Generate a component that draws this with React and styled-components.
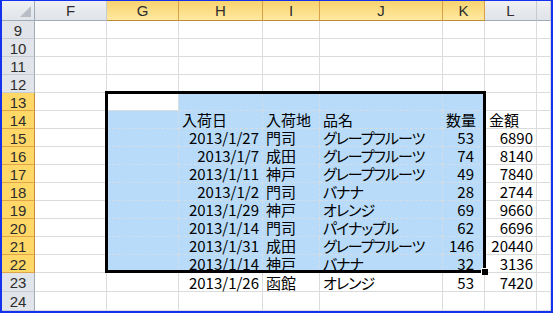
import React from 'react'
import styled, { createGlobalStyle, css } from 'styled-components'

const GlobalStyle = createGlobalStyle`
  html, body { margin: 0; padding: 0; background: #ffffff; }
  body { font-family: "Noto Sans CJK JP", "Liberation Sans", sans-serif; }
`

const Screen = styled.div`
  width: 555px;
  height: 313px;
  background: #ffffff;
  overflow: hidden;
`

const Frame = styled.div`
  box-sizing: border-box;
  width: 553px;
  height: 313px;
  border-style: solid;
  border-color: #1432ee;
  border-width: 1px 2px 2px 2px;
  overflow: hidden;
`

const Sheet = styled.div`
  display: grid;
  grid-template-columns: 33px 72px 72px 84px 57px 123px 42px 52px 1fr;
  grid-template-rows: 20px repeat(14, 18px) 19px 19px 18px;
  font-size: 15px;
  color: #000;
`

// each part sits at its own row/column of the sheet grid
const placed = css`
  grid-row: ${p => p.$r};
  grid-column: ${p => p.$c};
`

const Corner = styled.div`
  ${placed}
  position: relative;
  box-sizing: border-box;
  background: linear-gradient(#eef0f3, #e1e4e8);
  border-right: 1px solid #9eabb9;
  border-bottom: 1px solid #9eabb9;

  &::after {
    content: '';
    position: absolute;
    right: 3px;
    bottom: 3px;
    border-style: solid;
    border-width: 0 0 11px 11px;
    border-color: transparent transparent #b9bec6 transparent;
  }
`

const ColHead = styled.div`
  ${placed}
  box-sizing: border-box;
  display: flex;
  align-items: center;
  justify-content: center;
  font-family: "Liberation Sans", sans-serif;
  font-size: 15px;
  color: #2d2d2d;
  background: ${p => p.$sel
    ? 'linear-gradient(#f8d36f, #ffe9a0)'
    : 'linear-gradient(#eef0f3, #e0e3e7)'};
  border-right: 1px solid ${p => p.$sel ? '#d9a048' : '#c6cbd1'};
  border-bottom: 1px solid ${p => p.$sel ? '#c28a36' : '#9eabb9'};
`

const RowHead = styled.div`
  ${placed}
  box-sizing: border-box;
  display: flex;
  align-items: center;
  justify-content: center;
  padding-top: 1px;
  font-family: "Liberation Sans", sans-serif;
  font-size: 15px;
  color: #2d2d2d;
  background: ${p => p.$sel ? '#ffd867' : '#e1e4e8'};
  border-right: 1px solid ${p => p.$sel ? '#c28a36' : '#9eabb9'};
  border-bottom: 1px solid ${p => p.$sel ? '#e0a548' : '#c6cbd1'};
`

const Cell = styled.div`
  ${placed}
  box-sizing: border-box;
  display: flex;
  align-items: flex-end;
  justify-content: ${p => p.$right ? 'flex-end' : 'flex-start'};
  padding: 0 ${p => p.$pr ?? 3}px 0 ${p => p.$pl ?? 3}px;
  line-height: 16px;
  white-space: nowrap;
  overflow: visible;
  font-feature-settings: "palt";
  letter-spacing: ${p => p.$tight ? '-1px' : '0'};
  background: ${p => p.$sel ? '#b7dbf8' : '#ffffff'};
  border-right: 1px ${p => p.$sel ? 'dashed #d3dde8' : 'solid #dadcdd'};
  border-bottom: 1px ${p => p.$sel ? 'dashed #d3dde8' : 'solid #dadcdd'};
`

const Selection = styled.div`
  grid-column: 3 / 8;
  grid-row: 6 / 16;
  margin: -2px -1px 0 -2px;
  border: 3px solid #000;
  position: relative;
  pointer-events: none;
  z-index: 2;
`

const FillHandle = styled.div`
  position: absolute;
  right: -5px;
  bottom: -5px;
  width: 6px;
  height: 6px;
  background: #000;
  border: 1px solid #fff;
  border-width: 1px 0 0 1px;
`

const COLS = ['F', 'G', 'H', 'I', 'J', 'K', 'L', '']
const SEL_COLS = ['G', 'H', 'I', 'J', 'K']
const ROWS = Array.from({ length: 17 }, (_, i) => i + 9)

const DATA = {
  14: { H: '入荷日', I: '入荷地', J: '品名', K: '数量', L: '金額' },
  15: ['2013/1/27', '門司', 'グレープフルーツ', '53', '6890'],
  16: ['2013/1/7', '成田', 'グレープフルーツ', '74', '8140'],
  17: ['2013/1/11', '神戸', 'グレープフルーツ', '49', '7840'],
  18: ['2013/1/2', '門司', 'バナナ', '28', '2744'],
  19: ['2013/1/29', '神戸', 'オレンジ', '69', '9660'],
  20: ['2013/1/14', '門司', 'パイナップル', '62', '6696'],
  21: ['2013/1/31', '成田', 'グレープフルーツ', '146', '20440'],
  22: ['2013/1/14', '神戸', 'バナナ', '32', '3136'],
  23: ['2013/1/26', '函館', 'オレンジ', '53', '7420'],
}

const cellValue = (row, col) => {
  const d = DATA[row]
  if (!d) return ''
  if (!Array.isArray(d)) return d[col] || ''
  const idx = { H: 0, I: 1, J: 2, K: 3, L: 4 }[col]
  return idx === undefined ? '' : d[idx]
}

const isNumeric = (row, col) => row !== 14 && ['H', 'K', 'L'].includes(col)

const App = () => {
  return (
    <Screen>
      <GlobalStyle />
      <Frame>
        <Sheet>
          <Corner $r={1} $c={1} />
          {COLS.map((c, ci) => (
            <ColHead key={c || 'M'} $r={1} $c={ci + 2} $sel={SEL_COLS.includes(c)}>{c}</ColHead>
          ))}
          {ROWS.map((r, ri) => (
            <React.Fragment key={r}>
              <RowHead $r={ri + 2} $c={1} $sel={r >= 13 && r <= 22}>{r <= 24 ? r : ''}</RowHead>
              {COLS.map((c, ci) => {
                const sel = r >= 13 && r <= 22 && SEL_COLS.includes(c) && !(r === 13 && c === 'G')
                return (
                  <Cell
                    key={c || 'M'}
                    $r={ri + 2}
                    $c={ci + 2}
                    $sel={sel}
                    $right={isNumeric(r, c)}
                    $tight={c === 'J' && r !== 14}
                    $pr={c === 'K' ? 10 : 3}
                    $pl={c === 'L' ? 4 : 3}
                  >
                    {cellValue(r, c)}
                  </Cell>
                )
              })}
            </React.Fragment>
          ))}
          <Selection>
            <FillHandle />
          </Selection>
        </Sheet>
      </Frame>
    </Screen>
  )
}

export default App
